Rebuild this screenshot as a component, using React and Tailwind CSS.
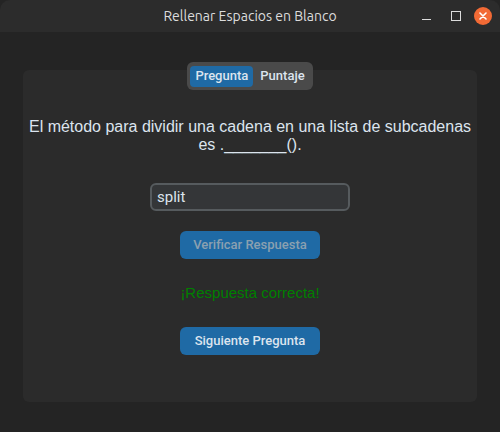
import React, { useState } from 'react';

function TitleBar() {
  return (
    <div className="relative flex h-[32px] items-center justify-center rounded-t-[10px] bg-[#2c2c2c]">
      <span className="text-[14px] text-[#dcdcdc]" style={{ fontFamily: 'Ubuntu, "Noto Sans", sans-serif' }}>Rellenar Espacios en Blanco</span>
      <div className="absolute right-[8px] top-[7px] flex items-center">
        <div className="h-[1px] w-[9px] translate-y-[3px] bg-[#dcdcdc]" />
        <div className="ml-[20px] h-[10px] w-[10px] border border-[#dcdcdc]" />
        <div className="ml-[13px] flex h-[18px] w-[18px] items-center justify-center rounded-full bg-[#f26a35]">
          <svg width="8" height="8" viewBox="0 0 8 8"><path d="M1 1L7 7M7 1L1 7" stroke="#fff" strokeWidth="1.6" strokeLinecap="round" /></svg>
        </div>
      </div>
    </div>
  );
}

export default function App() {
  const [tab, setTab] = useState('Pregunta');
  const [answer, setAnswer] = useState('split');
  const font = { fontFamily: 'Roboto, "Liberation Sans", sans-serif' };

  return (
    <div className="h-[432px] w-[500px] overflow-hidden bg-[#242424]">
      <TitleBar />
      <div className="px-[23px] pt-[38px]">
        <div className="flex h-[332px] flex-col items-center rounded-[6px] bg-[#2b2b2b]">
          <div className="-mt-[8px] flex h-[28px] items-center gap-[2px] rounded-[6px] bg-[#4a4a4a] px-[3px]" style={font}>
            {['Pregunta', 'Puntaje'].map((t) => (
              <button
                key={t}
                onClick={() => setTab(t)}
                className={`h-[21px] rounded-[4px] px-[5px] text-[13px] font-medium text-[#dce4ee] ${tab === t ? 'bg-[#1f6aa5]' : ''}`}
              >
                {t}
              </button>
            ))}
          </div>
          <p className="mt-[28px] px-[4px] text-center text-[16px] leading-[18px] text-[#dce4ee]" style={{ fontFamily: '"Liberation Sans", Arial, sans-serif' }}>
            El método para dividir una cadena en una lista de subcadenas es ._______().
          </p>
          <input
            autoFocus
            value={answer}
            onChange={(e) => setAnswer(e.target.value)}
            className="mt-[29px] h-[28px] w-[200px] rounded-[6px] border-2 border-[#565b5e] bg-[#343638] px-[5px] text-[15px] text-[#dce4ee] caret-white outline-none"
            style={font}
          />
          <button className="mt-[20px] h-[28px] w-[140px] rounded-[6px] bg-[#1f6aa5] text-[13px] font-medium text-[#8ba0b0]" style={font}>
            Verificar Respuesta
          </button>
          <p className="mt-[25px] text-[15px] leading-[17px] text-[#008000]" style={{ fontFamily: '"Liberation Sans", Arial, sans-serif' }}>
            ¡Respuesta correcta!
          </p>
          <button className="mt-[26px] h-[28px] w-[140px] rounded-[6px] bg-[#1f6aa5] text-[13px] font-medium text-[#dce4ee]" style={font}>
            Siguiente Pregunta
          </button>
        </div>
      </div>
    </div>
  );
}
